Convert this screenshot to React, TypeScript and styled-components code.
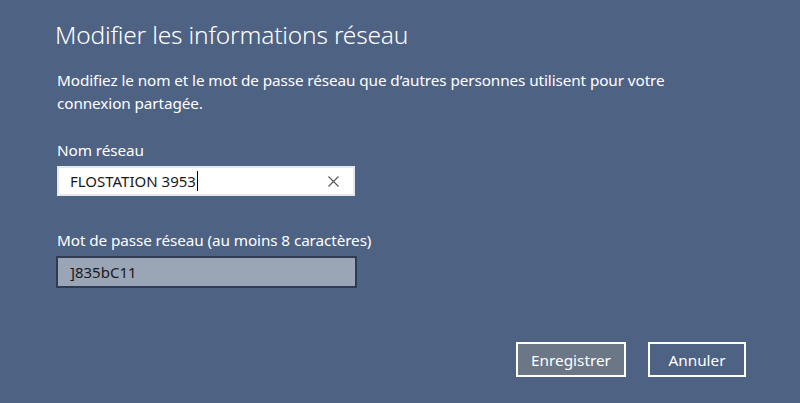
import React from "react";
import styled, { createGlobalStyle } from "styled-components";

const Global = createGlobalStyle`
  html, body { margin: 0; padding: 0; background: #4e6284; }
  * { box-sizing: border-box; }
`;

const Page = styled.div`
  width: 800px;
  height: 403px;
  background: #4e6284;
  color: #ffffff;
  font-family: "Noto Sans", "Open Sans", sans-serif;
  display: flex;
  flex-direction: column;
  padding: 17px 0 0 55px;
  overflow: hidden;
`;

const Title = styled.h1`
  margin: 0;
  font-size: 24.5px;
  font-weight: 300;
  line-height: 36px;
  letter-spacing: -0.2px;
`;

const Description = styled.p`
  margin: 16px 0 0 2px;
  width: 670px;
  font-size: 15.3px;
  line-height: 23px;
  letter-spacing: -0.1px;
`;

const Field = styled.div<{ $top: number }>`
  display: flex;
  flex-direction: column;
  margin: ${(p) => p.$top}px 0 0 2px;
`;

const Label = styled.label`
  font-size: 15.3px;
  line-height: 20px;
  margin-bottom: 6px;
  letter-spacing: -0.1px;
`;

const InputBox = styled.div<{ $variant: "active" | "disabled" }>`
  width: ${(p) => (p.$variant === "active" ? "298px" : "301px")};
  height: ${(p) => (p.$variant === "active" ? "30px" : "32px")};
  display: flex;
  align-items: center;
  padding: 0 10px 0 ${(p) => (p.$variant === "active" ? "11px" : "12px")};
  font-size: 15px;
  color: #1a1a1a;
  background: ${(p) => (p.$variant === "active" ? "#ffffff" : "#9aa6b6")};
  border: 2px solid ${(p) => (p.$variant === "active" ? "#e6e8ec" : "#2e3b50")};
  margin-left: ${(p) => (p.$variant === "active" ? "0" : "-1px")};
`;

const Value = styled.span`
  flex: 1;
  display: flex;
  align-items: center;
`;

const Caret = styled.span`
  display: inline-block;
  width: 1px;
  height: 20px;
  background: #000;
  margin-left: 1px;
`;

const Clear = styled.svg`
  width: 11px;
  height: 11px;
  margin-right: 4px;
`;

const Actions = styled.div`
  display: flex;
  gap: 22px;
  margin: 54px 0 0 461px;
`;

const Button = styled.button<{ $primary?: boolean }>`
  height: 35px;
  padding: 0;
  width: ${(p) => (p.$primary ? "110px" : "98px")};
  border: 2px solid #ffffff;
  background: ${(p) => (p.$primary ? "#6b7787" : "transparent")};
  color: #ffffff;
  font-family: inherit;
  font-size: 15.3px;
`;

export default function App() {
  return (
    <Page>
      <Global />
      <Title>Modifier les informations réseau</Title>
      <Description>
        Modifiez le nom et le mot de passe réseau que d’autres personnes utilisent pour votre connexion partagée.
      </Description>
      <Field $top={25}>
        <Label>Nom réseau</Label>
        <InputBox $variant="active">
          <Value>
            FLOSTATION 3953<Caret />
          </Value>
          <Clear viewBox="0 0 11 11">
            <path d="M0.5 0.5 L10.5 10.5 M10.5 0.5 L0.5 10.5" stroke="#555" strokeWidth="1.1" />
          </Clear>
        </InputBox>
      </Field>
      <Field $top={34}>
        <Label>Mot de passe réseau (au moins 8 caractères)</Label>
        <InputBox $variant="disabled">
          <Value>]835bC11</Value>
        </InputBox>
      </Field>
      <Actions>
        <Button $primary>Enregistrer</Button>
        <Button>Annuler</Button>
      </Actions>
    </Page>
  );
}
